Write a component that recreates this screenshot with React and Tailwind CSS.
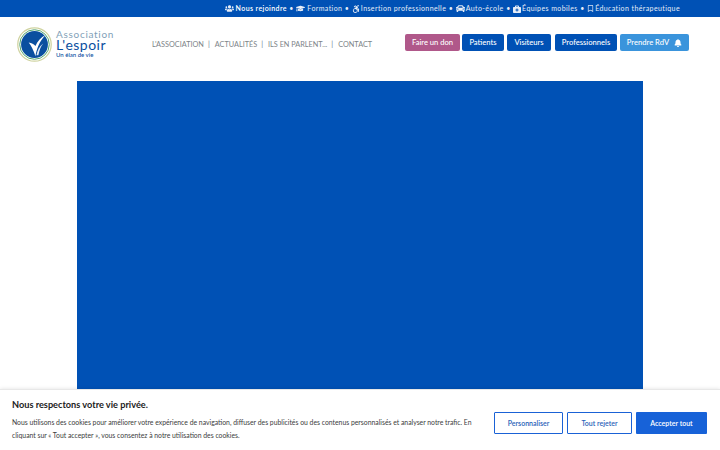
import { FaUsers, FaGraduationCap, FaAccessibleIcon, FaCar, FaBriefcaseMedical, FaRegBookmark, FaBell } from 'react-icons/fa'

const TOP_LINKS = [
  { label: 'Nous rejoindre', icon: FaUsers, iconClass: 'mr-[2px] size-[9px]', bold: true },
  { label: 'Formation', icon: FaGraduationCap, iconClass: 'mr-[2px] size-[9px]' },
  { label: 'Insertion professionnelle', icon: FaAccessibleIcon, iconClass: 'mr-[1px] size-[8px]' },
  { label: 'Auto-école', icon: FaCar, iconClass: 'mr-[1px] size-[9px]' },
  { label: 'Équipes mobiles', icon: FaBriefcaseMedical, iconClass: 'mr-[1px] size-[8px]' },
  { label: 'Éducation thérapeutique', icon: FaRegBookmark, iconClass: 'mr-[1px] size-[7px]', last: true },
]

const NAV = ["L'ASSOCIATION", 'ACTUALITÉS', 'ILS EN PARLENT...', 'CONTACT']

function Logo() {
  return (
    <div className="flex items-center gap-[4px]">
      <svg width="35" height="35" viewBox="0 0 36 36">
        <circle cx="18" cy="18" r="17.2" fill="#fff" stroke="#cfd3a0" strokeWidth="1.3" />
        <circle cx="18" cy="18" r="15.2" fill="none" stroke="#4fa36b" strokeWidth="1" />
        <circle cx="18" cy="18" r="13.8" fill="#0a4f9f" />
        <path d="M12 16c2.500 3 5 8 7 14 1-7 4-15 10-21.500-4 2-8 6-10 11-1.500-1.500-4-3-7-3.500z" fill="#fff" />
        <path d="M20 29c1-5 3-9 7-12-2.500 3-4 7-5 12z" fill="#dfe9f5" />
      </svg>
      <div className="flex flex-col font-['Lato',sans-serif]">
        <span className="text-[10px] leading-[9px] tracking-[0.7px] text-[#7f9fb8]">Association</span>
        <span className="text-[14px] leading-[11px] tracking-[0.5px] text-[#0a4f9f]">L'espoir</span>
        <span className="text-[6px] font-medium leading-[10px] text-[#0a4f9f]">Un élan de vie</span>
      </div>
    </div>
  )
}

export default function App() {
  return (
    <div className="relative h-[450px] w-[720px] overflow-hidden bg-white font-['Lato',sans-serif]">
      <div className="flex h-[17px] items-center justify-end bg-[#0051b5] pr-[40px] text-[7px] tracking-[0.4px] text-[#e6edf7]">
        {TOP_LINKS.map(({ label, icon: Icon, iconClass, bold, last }) => (
          <span key={label} className="flex items-center whitespace-nowrap">
            <Icon className={iconClass} />
            <span className={bold ? 'font-semibold text-white' : ''}>{label}</span>
            {!last && <span className="mx-[2.500px]">•</span>}
          </span>
        ))}
      </div>

      <header className="flex h-[64px] items-start">
        <div className="ml-[17px] mt-[10px] w-[135px]">
          <Logo />
        </div>
        <nav className="mt-[22px] flex w-[253px] items-center text-[7.300px] leading-[12px] text-[#7d8488]">
          {NAV.map((item, i) => (
            <span key={item} className="whitespace-nowrap">
              {item}
              {i < NAV.length - 1 && <span className="ml-[4px] mr-[5px] text-[#5f7d8c]">|</span>}
            </span>
          ))}
        </nav>
        <div className="mt-[17px] flex text-[7.600px] font-medium text-white">
          <button className="h-[17px] w-[55px] rounded-[2px] bg-[#b0588a]">Faire un don</button>
          <button className="ml-[2px] h-[17px] w-[42px] rounded-[2px] bg-[#0051b5]">Patients</button>
          <button className="ml-[3px] h-[17px] w-[44px] rounded-[2px] bg-[#0051b5]">Visiteurs</button>
          <button className="ml-[4px] h-[17px] w-[62px] rounded-[2px] bg-[#0051b5]">Professionnels</button>
          <button className="ml-[3px] flex h-[17px] w-[69px] items-center justify-center gap-[5px] rounded-[2px] bg-[#3a94dc]">
            Prendre RdV <FaBell className="size-[8px]" />
          </button>
        </div>
      </header>

      <div className="mx-auto h-[320px] w-[566px] bg-[#0051b5]" />

      <div className="absolute inset-x-0 bottom-0 h-[61px] border-t border-[#e8e8e8] bg-white px-[12px] pt-[9px] shadow-[0_0_4px_rgba(0,0,0,0.12)]">
        <div className="text-[9.200px] font-bold leading-[12px] text-[#212121]">Nous respectons votre vie privée.</div>
        <div className="flex items-start">
          <p className="mt-[5px] w-[470px] shrink-0 text-[6.830px] leading-[13px] text-[#3c3c3c]">
            Nous utilisons des cookies pour améliorer votre expérience de navigation, diffuser des publicités ou des contenus personnalisés et analyser notre trafic. En cliquant sur « Tout accepter », vous consentez à notre utilisation des cookies.
          </p>
          <div className="ml-[12px] mt-[1px] flex gap-[4px] text-[7px] font-semibold">
            <button className="h-[22px] w-[69px] rounded-[1px] border border-[#1a62d6] text-[#2a62b8]">Personnaliser</button>
            <button className="h-[22px] w-[65px] rounded-[1px] border border-[#1a62d6] text-[#2a62b8]">Tout rejeter</button>
            <button className="h-[22px] w-[71px] rounded-[1px] bg-[#1762d8] text-white">Accepter tout</button>
          </div>
        </div>
      </div>
    </div>
  )
}
